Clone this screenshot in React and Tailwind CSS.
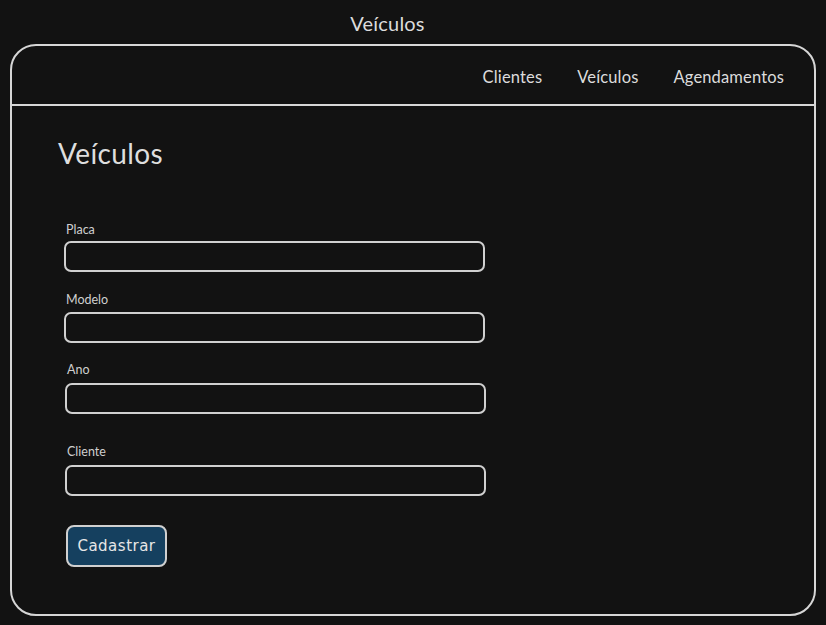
export default function App() {
  const font = { fontFamily: "Lato, 'Noto Sans', sans-serif" };
  return (
    <div className="w-[826px] h-[625px] bg-[#121212] text-[#dcdcdc] overflow-hidden" style={font}>
      <div className="h-[44px] flex items-center justify-center text-[20px] tracking-[0.2px] pr-[51px] pt-[1px]">Veículos</div>
      <div className="mx-[10px] h-[572px] border-2 border-[#d6d6d6] rounded-[26px] flex flex-col">
        <div className="h-[60px] border-b-2 border-[#d6d6d6] flex items-center justify-end gap-[35px] pr-[30px] text-[16.5px] tracking-[0.15px] pt-[4px]">
          <span>Clientes</span>
          <span>Veículos</span>
          <span>Agendamentos</span>
        </div>
        <div className="pl-[46px] pt-[30px] flex flex-col">
          <h1 className="text-[28px] leading-[34px] tracking-[0.4px] text-[#dedede]">Veículos</h1>
          <div className="mt-[52px] ml-[6px] flex flex-col">
            <label className="text-[12.5px] leading-[16px] ml-[2px] text-[#cfcfcf]">Placa</label>
            <div className="mt-[3px] w-[421px] h-[31px] border-2 border-[#d0d0d0] rounded-[7px]"></div>
            <label className="mt-[20px] text-[12.5px] leading-[16px] ml-[2px] text-[#cfcfcf]">Modelo</label>
            <div className="mt-[4px] w-[421px] h-[31px] border-2 border-[#d0d0d0] rounded-[7px]"></div>
          </div>
          <div className="mt-[19px] ml-[7px] flex flex-col">
            <label className="text-[12.5px] leading-[16px] ml-[2px] text-[#cfcfcf]">Ano</label>
            <div className="mt-[5px] w-[421px] h-[31px] border-2 border-[#d0d0d0] rounded-[7px]"></div>
            <label className="mt-[30px] text-[12.5px] leading-[16px] ml-[2px] text-[#cfcfcf]">Cliente</label>
            <div className="mt-[5px] w-[421px] h-[31px] border-2 border-[#d0d0d0] rounded-[7px]"></div>
            <button className="mt-[29px] ml-[1px] w-[101px] h-[42px] bg-[#15405f] border-2 border-[#d0d0d0] rounded-[8px] text-[15px] text-[#e6e6e6] tracking-[0.5px]" style={{ fontFamily: "'Comic Sans MS', 'DejaVu Sans', sans-serif" }}>
              Cadastrar
            </button>
          </div>
        </div>
      </div>
    </div>
  );
}
